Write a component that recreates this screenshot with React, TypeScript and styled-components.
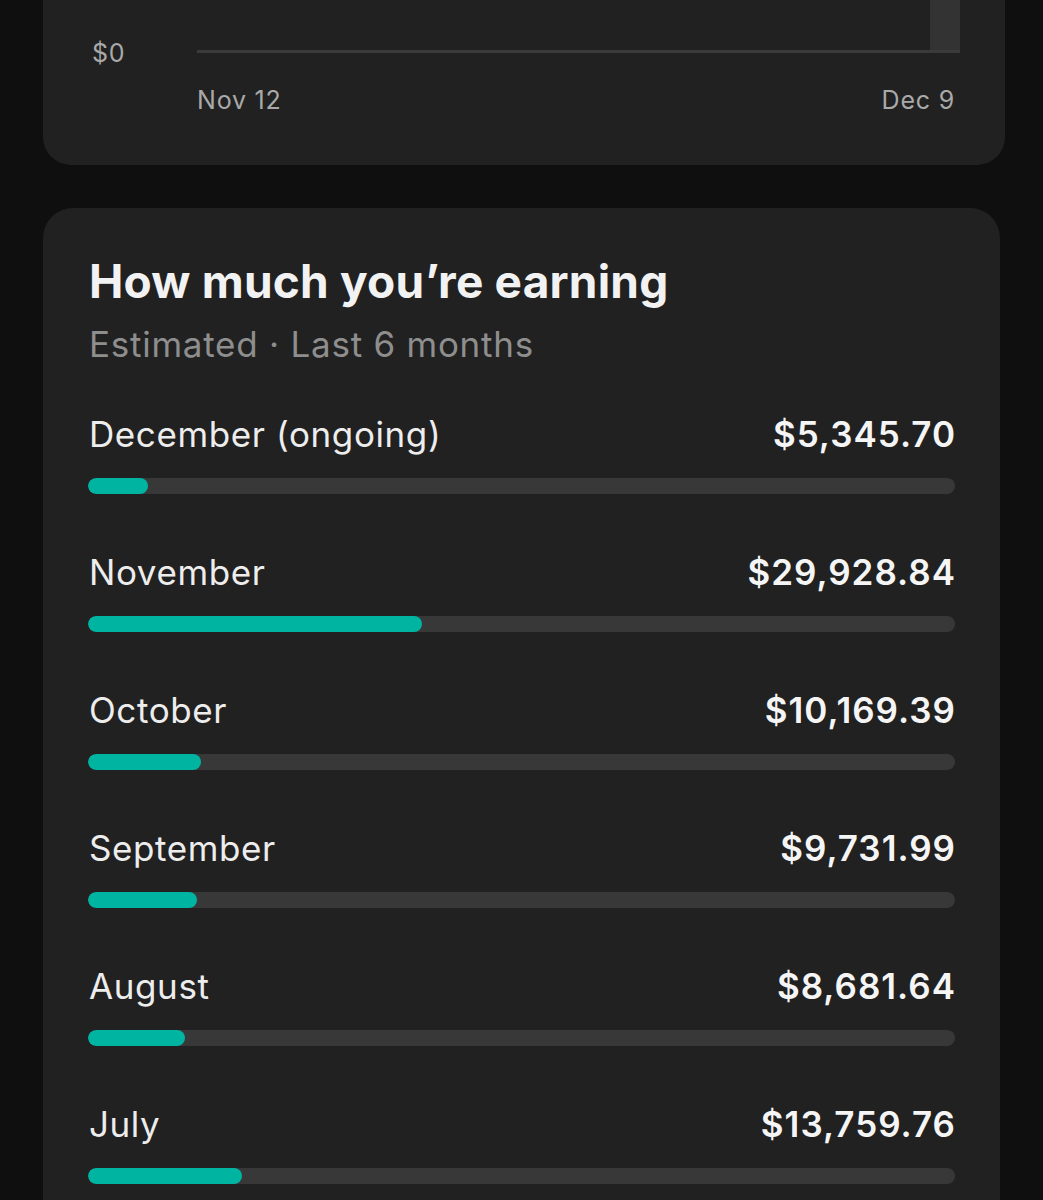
import styled, { createGlobalStyle } from "styled-components"

const GlobalStyle = createGlobalStyle`
    html, body {
        margin: 0;
        padding: 0;
        background: #0f0f0f;
    }
    body {
        font-family: 'Inter', 'Noto Sans', sans-serif;
        -webkit-font-smoothing: antialiased;
    }
`

const Page = styled.div`
    display: flex;
    flex-direction: column;
    gap: 43px;
    padding: 0 38px 0 43px;
    height: 1200px;
    overflow: hidden;
`

const Card = styled.section<{ $cut?: boolean; $inset?: number }>`
    background: #212121;
    border-radius: ${p => p.$cut ? '0 0 28px 28px' : '30px'};
    margin-right: ${p => p.$inset ?? 0}px;
`

const ChartCard = styled(Card)`
    padding: 0 45px 51px 49px;
`

const ChartGrid = styled.div`
    display: grid;
    grid-template-columns: 105px 1fr;
    row-gap: 33px;
`

const AxisLabel = styled.span<{ $end?: boolean }>`
    font-size: 25px;
    line-height: 28px;
    letter-spacing: 0.8px;
    color: #a9a9a9;
    text-align: ${p => p.$end ? 'right' : 'left'};
`

const YLabel = styled(AxisLabel)`
    align-self: end;
    margin-bottom: -14px;
`

const Plot = styled.div`
    height: 50px;
    border-bottom: 3px solid #3a3a3a;
    display: flex;
    justify-content: flex-end;
    align-items: flex-end;
`

const PlotBar = styled.div`
    width: 30px;
    height: 100%;
    background: #333333;
`

const XLabels = styled.div`
    grid-column: 2;
    display: flex;
    justify-content: space-between;
    padding-right: 5px;
`

const EarningsCard = styled(Card)`
    padding: 46px 45px 60px 45px;
`

const Title = styled.h2`
    margin: 0 0 0 1px;
    font-size: 46px;
    line-height: 54px;
    font-weight: 700;
    letter-spacing: 0.2px;
    color: #f2f2f2;
`

const Subtitle = styled.p`
    margin: 15px 0 0 1px;
    font-size: 35px;
    line-height: 42px;
    letter-spacing: 0.75px;
    color: #8e8e8e;
`

const MonthList = styled.div`
    display: flex;
    flex-direction: column;
    gap: 58px;
    margin-top: 49px;
`

const MonthRow = styled.div`
    display: flex;
    flex-direction: column;
    gap: 24px;
`

const RowHead = styled.div`
    display: flex;
    justify-content: space-between;
    align-items: baseline;
    font-size: 35px;
    line-height: 40px;
    padding-left: 1px;
`

const MonthName = styled.span`
    color: #ededed;
    letter-spacing: 0.6px;
`

const Amount = styled.span`
    color: #f5f5f5;
    font-weight: 600;
    letter-spacing: 1px;
    margin-right: -1px;
`

const Track = styled.div`
    height: 16px;
    border-radius: 8px;
    background: #383838;
    overflow: hidden;
`

const Fill = styled.div`
    height: 100%;
    border-radius: 8px;
    background: #00b4a2;
`

const months = [
    { name: 'December (ongoing)', value: 5345.70 },
    { name: 'November', value: 29928.84 },
    { name: 'October', value: 10169.39 },
    { name: 'September', value: 9731.99 },
    { name: 'August', value: 8681.64 },
    { name: 'July', value: 13759.76 },
]

const SCALE = 77700

const fmt = (n: number) =>
    '$' + n.toLocaleString('en-US', { minimumFractionDigits: 2, maximumFractionDigits: 2 })

export default function App() {
    return (
        <>
            <GlobalStyle />
            <Page>
                <ChartCard $cut>
                    <ChartGrid>
                        <YLabel>$0</YLabel>
                        <Plot>
                            <PlotBar />
                        </Plot>
                        <XLabels>
                            <AxisLabel>Nov 12</AxisLabel>
                            <AxisLabel $end>Dec 9</AxisLabel>
                        </XLabels>
                    </ChartGrid>
                </ChartCard>

                <EarningsCard $inset={5}>
                    <Title>How much you’re earning</Title>
                    <Subtitle>Estimated · Last 6 months</Subtitle>
                    <MonthList>
                        {months.map(m => (
                            <MonthRow key={m.name}>
                                <RowHead>
                                    <MonthName>{m.name}</MonthName>
                                    <Amount>{fmt(m.value)}</Amount>
                                </RowHead>
                                <Track>
                                    <Fill style={{ width: `${(m.value / SCALE) * 100}%` }} />
                                </Track>
                            </MonthRow>
                        ))}
                    </MonthList>
                </EarningsCard>
            </Page>
        </>
    )
}
